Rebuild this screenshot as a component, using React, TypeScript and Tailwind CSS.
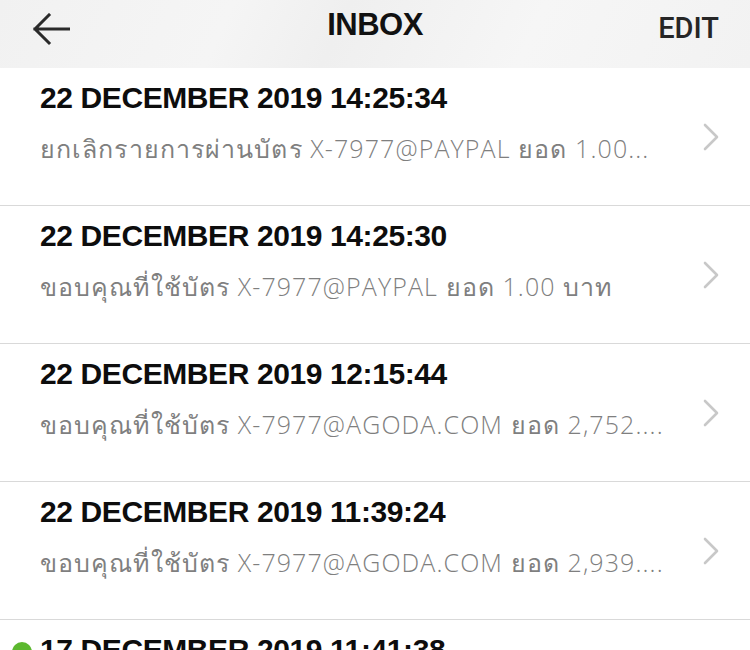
import React from "react";

const rows = [
  { title: "22 DECEMBER 2019 14:25:34", sub: "ยกเลิกรายการผ่านบัตร X-7977@PAYPAL ยอด 1.00...", dot: false },
  { title: "22 DECEMBER 2019 14:25:30", sub: "ขอบคุณที่ใช้บัตร X-7977@PAYPAL ยอด 1.00 บาท", dot: false },
  { title: "22 DECEMBER 2019 12:15:44", sub: "ขอบคุณที่ใช้บัตร X-7977@AGODA.COM ยอด 2,752....", dot: false },
  { title: "22 DECEMBER 2019 11:39:24", sub: "ขอบคุณที่ใช้บัตร X-7977@AGODA.COM ยอด 2,939....", dot: false },
  { title: "17 DECEMBER 2019 11:41:38", sub: "ขอบคุณที่ใช้บัตร X-7977@AGODA.COM ยอด 1,000....", dot: true },
];

function Chevron() {
  return (
    <svg width="18" height="28" viewBox="0 0 18 28" fill="none" className="shrink-0">
      <path d="M3 2 L15 14 L3 26" stroke="#c8c8c8" strokeWidth="2.6" strokeLinecap="round" strokeLinejoin="round" />
    </svg>
  );
}

export default function App() {
  return (
    <div
      className="w-[750px] h-[650px] overflow-hidden bg-white"
      style={{ fontFamily: '"Liberation Sans", "Noto Sans", "DejaVu Sans", sans-serif' }}
    >
      <header className="relative h-[68px] flex items-center justify-between px-[32px] bg-[linear-gradient(115deg,#f1f1f1_0%,#f5f5f5_30%,#efefef_45%,#f6f6f6_70%,#f2f2f2_100%)]">
        <svg width="38" height="34" viewBox="0 0 38 34" fill="none" className="-mt-[8px]">
          <path d="M37 16 H3 M17 2 L3 16 L17 30" stroke="#2a2a2a" strokeWidth="3" strokeLinecap="square" strokeLinejoin="miter" />
        </svg>
        <div className="absolute left-0 right-0 top-[7px] text-center text-[31px] leading-[36px] font-bold text-[#111] tracking-[-0.5px]">
          INBOX
        </div>
        <div className="font-['Roboto',sans-serif] text-[29px] leading-[36px] font-medium text-[#262626] -mt-[12px] -mr-[1px]">EDIT</div>
      </header>
      <div className="flex flex-col">
        {rows.map((r, i) => (
          <div key={i} className="relative h-[138px] border-b border-[#d9d9d9] flex items-center pl-[40px] pr-[30px]">
            {r.dot && <div className="absolute left-[12px] top-[22px] w-[20px] h-[20px] rounded-full bg-[#5cb82f]" />}
            <div className="flex-1 self-start pt-[13px]">
              <div className="text-[30px] leading-[34px] font-bold text-[#0d0d0d] tracking-[-0.4px]">{r.title}</div>
              <div className="mt-[18px] font-['Open_Sans','Liberation_Sans',sans-serif] font-light text-[25px] leading-[30px] text-[#7f7f7f] tracking-[1.1px] whitespace-nowrap">{r.sub}</div>
            </div>
            <Chevron />
          </div>
        ))}
      </div>
    </div>
  );
}
